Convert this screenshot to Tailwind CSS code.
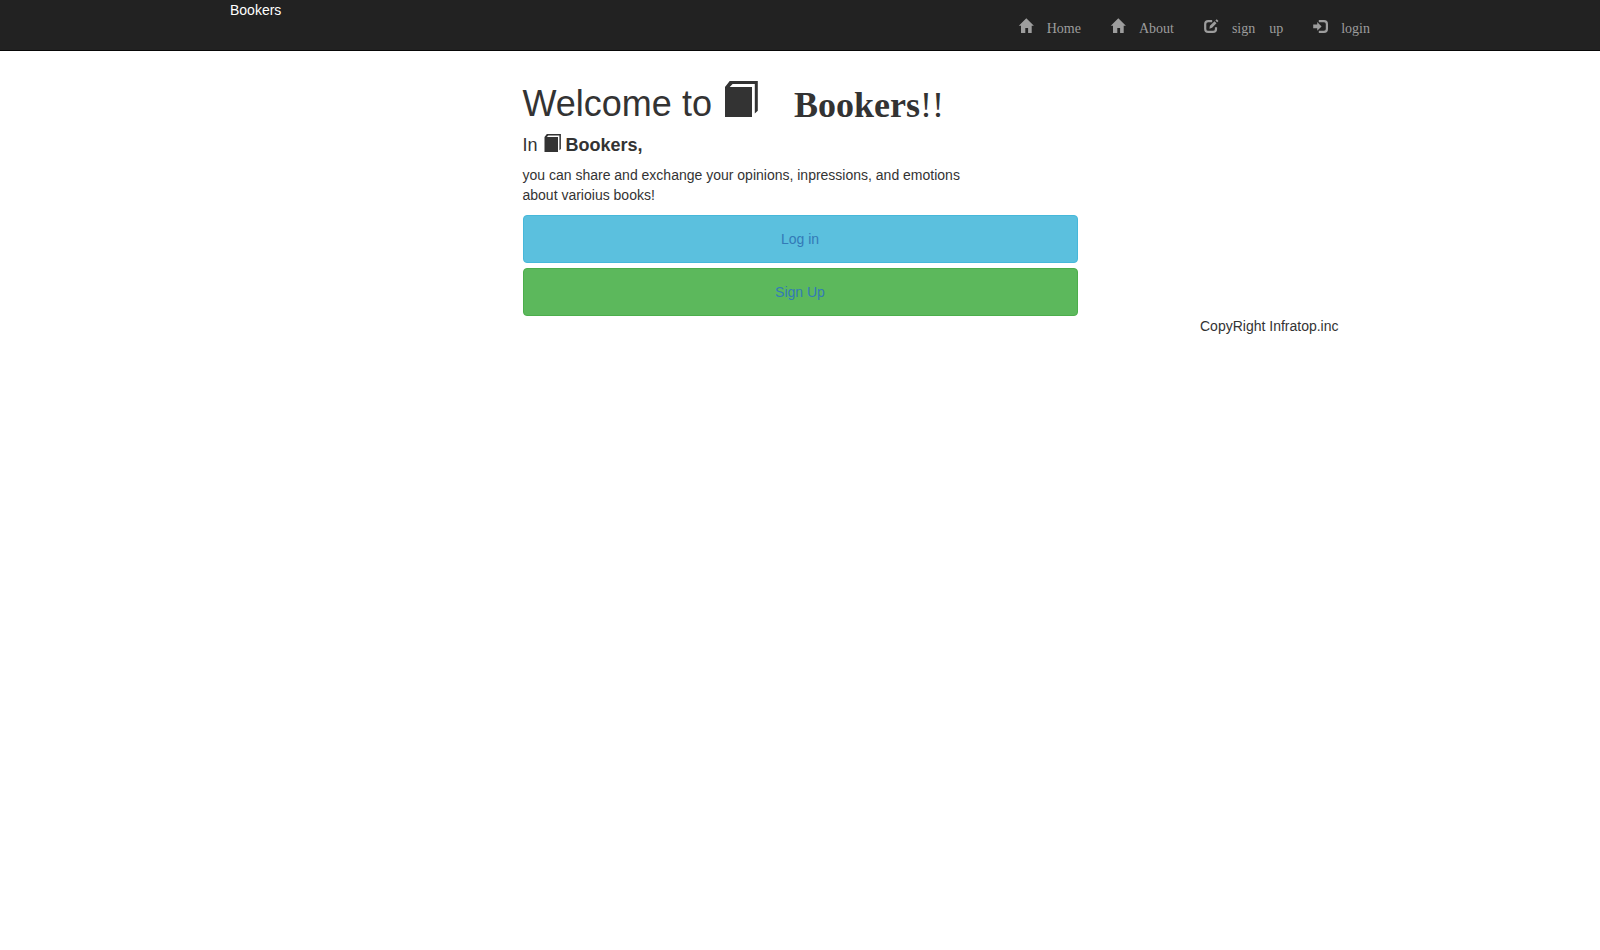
<!DOCTYPE html>
<html lang="en">
<head>
<meta charset="utf-8">
<title>Bookers</title>
<script src="https://cdn.jsdelivr.net/npm/@tailwindcss/browser@4"></script>
</head>
<body class="bg-white font-['Liberation_Sans',Arial,sans-serif] text-[14px] leading-[20px] text-[#333]">
<svg class="hidden">
  <symbol id="home" viewBox="0 0 14 14" overflow="visible"><path d="M7.3 -.8 14.9 6.8H12.7V14H9.1V9H6.3V14H2V6.8H-.2L7.3 -.8Z"/></symbol>
  <symbol id="book" viewBox="0 0 36 36" overflow="visible"><path d="M3 6 7.7 0H35.8V29.8L32.8 32.4V3H10.6L7.7 6H30V36H3Z"/></symbol>
</svg>
<header class="h-[51px] border-b border-[#080808] bg-[#222]">
  <div class="mx-auto flex w-[1170px] justify-between pr-0 pl-[15px]">
    <a class="text-white">Bookers</a>
    <nav class="flex font-['Liberation_Serif',serif] leading-[14px] text-[#9d9d9d]">
      <a class="flex gap-[14px] px-[15px] pt-[19px]"><svg class="h-[14px] w-[14px] overflow-visible" fill="currentColor"><use href="#home"/></svg><span class="pt-[3px]">Home</span></a>
      <a class="flex gap-[14px] px-[15px] pt-[19px]"><svg class="h-[14px] w-[14px] overflow-visible" fill="currentColor"><use href="#home"/></svg><span class="pt-[3px]">About</span></a>
      <a class="flex gap-[14px] px-[15px] pt-[19px]"><svg class="h-[14px] w-[14px] overflow-visible" viewBox="0 0 14 14" fill="none" stroke="currentColor"><path d="M8.2 2.1H4.2Q1.2 2.1 1.2 5.1V9.9Q1.2 12.9 4.2 12.9H9Q12 12.9 12 9.9V8.3" stroke-width="2.2"/><path d="M5.4 9.7 5.9 6.8 10.5 2.2 12.5 4.2 8.1 8.7Z M11.4 1.5 12.7 .2 14.5 2 13.2 3.3Z" fill="currentColor" stroke="none"/></svg><span class="pt-[3px]">sign</span><span class="pt-[3px]">up</span></a>
      <a class="flex gap-[14px] px-[15px] pt-[19px]"><svg class="h-[14px] w-[14px] overflow-visible" viewBox="0 0 14 14"><path d="M5.8 2.1H11Q13.9 2.1 13.9 5V10Q13.9 12.9 11 12.9H5.8" fill="none" stroke="currentColor" stroke-width="2.2"/><path d="M.2 5.5H4.2V2.9L8.6 7.4 4.2 11.8V9.3H.2Z" fill="currentColor"/></svg><span class="pt-[3px]">login</span></a>
    </nav>
  </div>
</header>
<main class="mx-auto w-[555px] pt-[32px]">
  <h1 class="flex h-[40px] text-[36px] leading-[40px] whitespace-pre"><span class="pt-px">Welcome to </span><svg class="-mt-[2px] h-[36px] w-[36px] overflow-visible" fill="currentColor"><use href="#book"/></svg><span class="ml-[36px] pt-[2px] font-['Liberation_Serif',serif]"><b>Bookers</b>!!</span></h1>
  <h4 class="mt-[12px] flex h-[20px] text-[18px] leading-[20px] whitespace-pre">In <svg class="-mt-px h-[18px] w-[18px] overflow-visible" viewBox="0 0 36 36" fill="currentColor"><use href="#book"/></svg><b> Bookers,</b></h4>
  <p class="mt-[10px]">you can share and exchange your opinions, inpressions, and emotions<br>about varioius books!</p>
  <a class="mt-[10px] flex h-[48px] items-center justify-center rounded-[4px] border border-[#46b8da] bg-[#5bc0de] text-[#337ab7]">Log in</a>
  <a class="mt-[5px] flex h-[48px] items-center justify-center rounded-[4px] border border-[#4cae4c] bg-[#5cb85c] text-[#337ab7]">Sign Up</a>
</main>
<footer class="mx-auto w-[1170px] pl-[985px]">CopyRight Infratop.inc</footer>
</body>
</html>
